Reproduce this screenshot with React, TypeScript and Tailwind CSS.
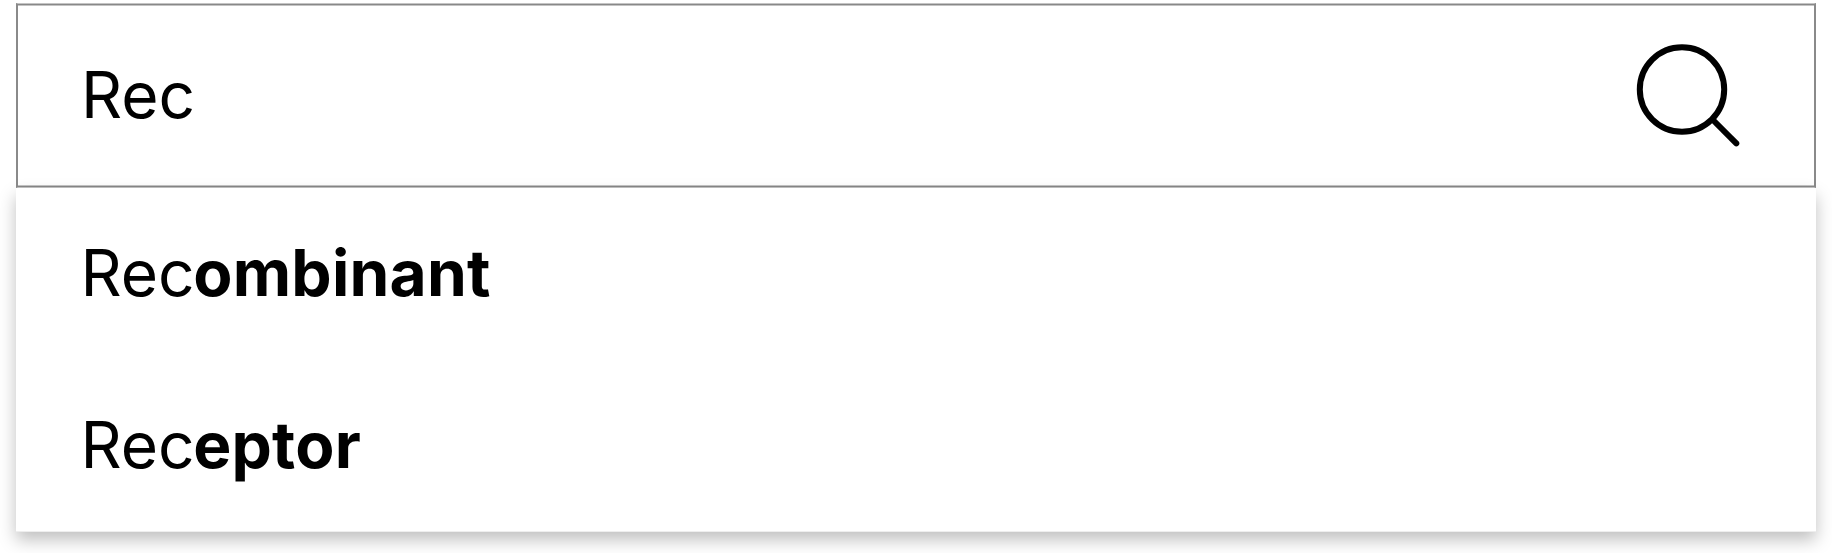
const suggestions = [
  { typed: "Rec", rest: "ombinant" },
  { typed: "Rec", rest: "eptor" },
];

export default function App() {
  return (
    <div className="h-[553px] w-full overflow-hidden bg-white px-4 pt-[3px] font-['Inter',sans-serif] text-[64px] leading-[80px] text-black">
      <div className="flex h-[185px] items-center justify-between border-x-2 border-y border-x-[#8a8a8a] border-y-[#c4c4c4] pr-[73px] pb-[2px] pl-[63px] shadow-[inset_0_1px_#888888,inset_0_-1px_#888888,inset_0_2px_#c4c4c4,inset_0_-2px_#c4c4c4]">
        <span>Rec</span>
        <svg className="h-[106px] w-[106px]" viewBox="0 0 106 106" fill="none" stroke="black" strokeWidth="6" strokeLinecap="round">
          <circle cx="47" cy="47.5" r="42.2" />
          <path d="M78 78L101.3 101.3" />
        </svg>
      </div>
      <ul className="h-[343px] border-b border-[#eeeeee] box-content bg-white shadow-[0_8px_16px_rgba(0,0,0,0.25)]">
        {suggestions.map((s) => (
          <li key={s.rest} className="h-[172px] pt-[45px] pl-[64.5px]">
            {s.typed}
            <b className="-ml-[1.5px] font-bold tracking-[0.25px]">{s.rest}</b>
          </li>
        ))}
      </ul>
    </div>
  );
}
